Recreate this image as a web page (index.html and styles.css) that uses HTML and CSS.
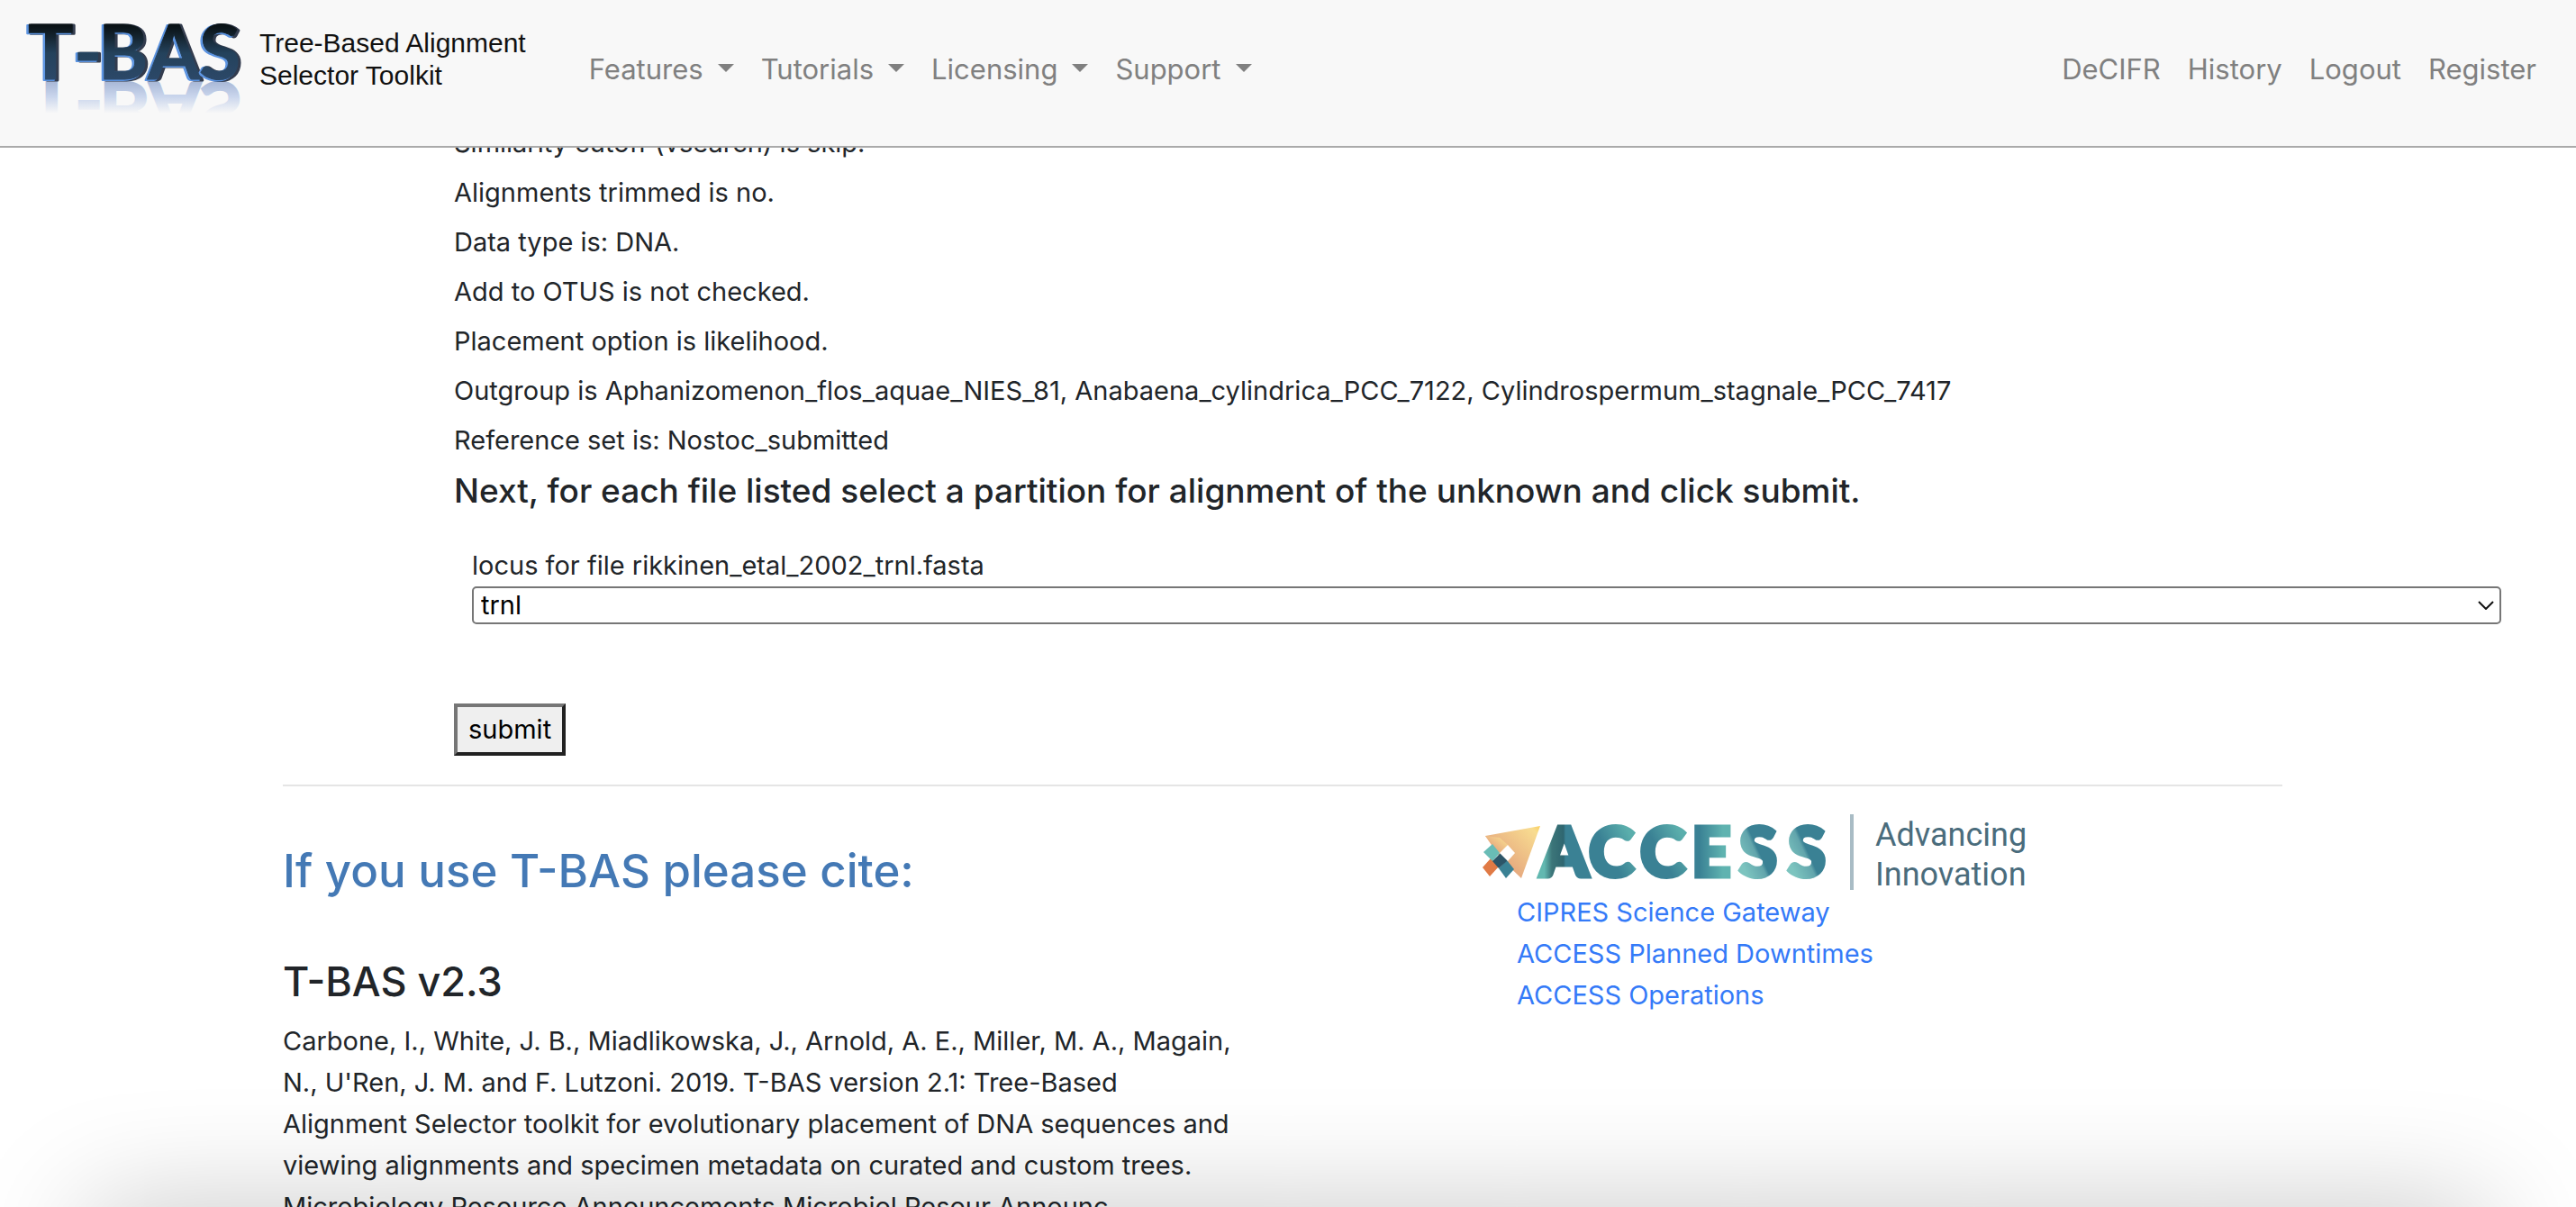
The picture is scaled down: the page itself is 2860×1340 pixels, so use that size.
FILE: index.html
```html
<!DOCTYPE html>
<html lang="en">
<head>
<meta charset="utf-8">
<title>T-BAS</title>
<link rel="stylesheet" href="styles.css">
</head>
<body>
<header class="navbar">
  <a class="brand" href="#" aria-label="T-BAS home">
    <svg class="brand-logo" width="242" height="104" viewBox="28 24 242 104">
      <defs>
        <linearGradient id="metal" gradientUnits="userSpaceOnUse" x1="0" y1="30" x2="0" y2="90">
          <stop offset="0" stop-color="#0a1216"/><stop offset=".2" stop-color="#142430"/><stop offset=".5" stop-color="#24425c"/><stop offset="1" stop-color="#2c4868"/>
        </linearGradient>
        <linearGradient id="fade" gradientUnits="userSpaceOnUse" x1="0" y1="92" x2="0" y2="54">
          <stop offset="0" stop-color="#a3b3d3"/><stop offset=".5" stop-color="#c9d5ec"/><stop offset="1" stop-color="#f8f8f8"/>
        </linearGradient>
        <g id="word">
          <text x="29" y="89">T</text><text x="80" y="89">-</text><text x="107" y="89">B</text><text x="162" y="89">A</text><text x="219" y="89">S</text>
        </g>
      </defs>
      <g class="logo-mirror" transform="translate(3 180) scale(1 -1)"><use href="#word"/></g>
      <g class="logo-side" transform="translate(4 0)"><use href="#word"/></g>
      <g class="logo-edge"><use href="#word"/></g>
      <g class="logo-face" transform="translate(2 -1)"><use href="#word"/></g>
    </svg>
    <span class="brand-text">Tree-Based Alignment<br>Selector Toolkit</span>
  </a>
  <nav class="menu">
    <a class="caret" href="#">Features</a>
    <a class="caret" href="#">Tutorials</a>
    <a class="caret" href="#">Licensing</a>
    <a class="caret" href="#">Support</a>
  </nav>
  <nav class="menu account">
    <a href="#">DeCIFR</a>
    <a href="#">History</a>
    <a href="#">Logout</a>
    <a href="#">Register</a>
  </nav>
</header>
<main>
  <form class="placement">
    <p>Similarity cutoff (vsearch) is skip.</p>
    <p>Alignments trimmed is no.</p>
    <p>Data type is: DNA.</p>
    <p>Add to OTUS is not checked.</p>
    <p>Placement option is likelihood.</p>
    <p>Outgroup is Aphanizomenon_flos_aquae_NIES_81, Anabaena_cylindrica_PCC_7122, Cylindrospermum_stagnale_PCC_7417</p>
    <p>Reference set is: Nostoc_submitted</p>
    <h5>Next, for each file listed select a partition for alignment of the unknown and click submit.</h5>
    <div class="field">
      <label for="locus">locus for file rikkinen_etal_2002_trnl.fasta</label>
      <div class="select-wrap">
        <select id="locus"><option>trnl</option></select>
        <svg class="chevron" width="18" height="10" viewBox="0 0 18 10"><path d="M1 1l8 8 8-8"/></svg>
      </div>
    </div>
    <button type="button">submit</button>
  </form>
  <section class="footer">
    <div class="cite">
      <h2>If you use T-BAS please cite:</h2>
      <h3>T-BAS v2.3</h3>
      <p>Carbone, I., White, J. B., Miadlikowska, J., Arnold, A. E., Miller, M. A., Magain, N., U'Ren, J. M. and F. Lutzoni. 2019. T-BAS version 2.1: Tree-Based Alignment Selector toolkit for evolutionary placement of DNA sequences and viewing alignments and specimen metadata on curated and custom trees. Microbiology Resource Announcements Microbiol Resour Announc.</p>
    </div>
    <div class="partners">
      <svg class="access" width="610" height="90" viewBox="1640 901 610 90">
        <defs>
          <linearGradient id="arrow" x1="0" y1="1" x2="1" y2="0"><stop offset=".2" stop-color="#e3a07c"/><stop offset=".9" stop-color="#f8dc90"/><stop offset="1" stop-color="#fbcf5c"/></linearGradient>
          <linearGradient id="teal-c" x1="0" y1="1" x2="1" y2="0"><stop offset=".45" stop-color="#3a8194"/><stop offset=".8" stop-color="#5aaeac"/></linearGradient>
          <linearGradient id="teal-e" x1="0" y1="0" x2="1" y2="0"><stop offset=".2" stop-color="#3a8194"/><stop offset=".8" stop-color="#5fb3b0"/></linearGradient>
          <linearGradient id="teal-a" x1="0" y1="0" x2="1" y2="0"><stop offset=".1" stop-color="#62b8b0"/><stop offset=".25" stop-color="#3c7579"/><stop offset=".48" stop-color="#2f6670"/><stop offset=".52" stop-color="#3a8194"/></linearGradient>
          <linearGradient id="teal-s" x1="1" y1="0" x2="0" y2="1"><stop offset=".5" stop-color="#3a8194"/><stop offset=".55" stop-color="#62a5ac"/><stop offset=".8" stop-color="#7cc4bf"/></linearGradient>
        </defs>
        <path d="M1649 929L1710 918 1689 976 1666 954z" fill="url(#arrow)"/>
        <path d="M1649 929l17 20 8-10-9-8z" fill="url(#arrow)"/>
        <path d="M1646 964l9-10 9 9-10 11z" fill="#e07a45"/>
        <path d="M1647 947l10-9 8 10-8 9z" fill="#69bcb6"/>
        <path d="M1664 965l9-9 8 10-9 10z" fill="#3a8194"/>
        <path d="M1657 957l9-9 8 8-10 9z" fill="#2c5568"/>
        <path d="M1665 948l9-9 8 9-8 9z" fill="#fff"/>
        <g class="access-word">
          <text class="ltr-a" x="1710" y="974">A</text><text class="ltr-c" x="1764" y="974">C</text><text class="ltr-c" x="1821" y="974">C</text><text class="ltr-e" x="1878" y="974">E</text><text class="ltr-s" x="1931" y="974">S</text><text class="ltr-s" x="1985" y="974">S</text>
        </g>
        <path d="M2054 905h4v84h-4z" fill="#a9bcc5"/>
        <g class="access-tag"><text x="2082" y="940">Advancing</text><text x="2082" y="984">Innovation</text></g>
      </svg>
      <ul>
        <li><a href="#">CIPRES Science Gateway</a></li>
        <li><a href="#">ACCESS Planned Downtimes</a></li>
        <li><a href="#">ACCESS Operations</a></li>
      </ul>
    </div>
  </section>
</main>
<div class="dock-shadow"></div>
</body>
</html>
```
FILE: styles.css
```css
* { box-sizing: border-box; }
html { overflow: hidden; }
body {
  margin: 0;
  height: 100vh;
  overflow: hidden;
  font: 29px/46px Inter, "Liberation Sans", sans-serif;
  color: #212529;
  background: #fff;
}
p, h2, h3, h5, ul { margin: 0; padding: 0; }
a { text-decoration: none; }

.navbar {
  position: fixed;
  top: 0;
  left: 0;
  right: 0;
  z-index: 2;
  display: flex;
  align-items: flex-start;
  height: 164px;
  padding: 24px 28px 0;
  background: #f8f8f8;
  border-bottom: 2px solid #aaa;
}
.brand { display: flex; gap: 18px; color: #111; }
.brand-logo { font: 700 84px Lato, sans-serif; }
.brand-text { padding-top: 6px; font: 30px/36px "Liberation Sans", sans-serif; }
.logo-mirror { fill: url(#fade); stroke: url(#fade); stroke-width: 2; }
.logo-side { fill: #333c4e; stroke: #333c4e; stroke-width: 3; stroke-linejoin: round; }
.logo-edge { fill: #6ba4f2; stroke: #5b93e0; stroke-width: 2; stroke-linejoin: round; }
.logo-face { fill: url(#metal); stroke: url(#metal); stroke-width: 1; stroke-linejoin: round; }
.menu { display: flex; gap: 30px; margin-left: 70px; padding-top: 29px; font-size: 31px; line-height: 48px; }
.menu a { color: #808080; }
.account { margin-left: auto; padding-right: 16px; }
.caret::after {
  content: "";
  display: inline-block;
  margin-left: 16px;
  vertical-align: 8px;
  border: 9px solid transparent;
  border-top-color: #808080;
  border-bottom: 0;
}

.placement { padding: 136px 83px 0 504px; }
.placement p { margin-bottom: 9px; }
h5 { font-size: 37px; line-height: 48px; font-weight: 500; }
.field { padding: 36px 0 0 20px; }
label { display: block; line-height: 46px; }
.select-wrap { position: relative; }
select {
  display: block;
  width: 100%;
  height: 42px;
  padding: 0 8px;
  appearance: none;
  background: #fff;
  border: 2px solid #767676;
  border-radius: 5px;
  font: inherit;
  line-height: 38px;
  color: #000;
}
.chevron { position: absolute; right: 8px; top: 16px; fill: none; stroke: #111; stroke-width: 2; }
button {
  display: block;
  margin-top: 88px;
  padding: 2px 12px;
  border: 4px solid;
  border-color: #767676 #212121 #212121 #767676;
  background: #efefef;
  font: inherit;
  color: #000;
}

.footer {
  display: flex;
  margin: 32px 326px 0 314px;
  border-top: 2px solid #e5e5e5;
}
.cite, .partners { flex: 0 0 50%; }
.cite { padding-right: 40px; }
h2 { padding-top: 60px; font-size: 51px; line-height: 68px; font-weight: 500; color: #4479b5; }
h3 { padding: 60px 0 14px; font-size: 45px; line-height: 58px; font-weight: 500; }
.partners { padding: 27px 0 0 216px; }
.access { display: block; }
.access-word { font: 900 76px Lato, sans-serif; stroke-width: 5; }
.ltr-a { fill: url(#teal-a); stroke: url(#teal-a); }
.ltr-c { fill: url(#teal-c); stroke: url(#teal-c); }
.ltr-e { fill: url(#teal-e); stroke: url(#teal-e); }
.ltr-s { fill: url(#teal-s); stroke: url(#teal-s); }
.access-tag { font: 36px Roboto, sans-serif; fill: #4a6c7c; }
ul { list-style: none; margin-left: 44px; }
li a { color: #347af8; }

/* Soft shadow rising from the bottom edge of the window */
.dock-shadow {
  position: fixed;
  z-index: 3;
  left: 100px;
  right: 100px;
  bottom: -105px;
  height: 100px;
  box-shadow: 0 0 130px rgba(0, 0, 0, .25);
  pointer-events: none;
}
```
